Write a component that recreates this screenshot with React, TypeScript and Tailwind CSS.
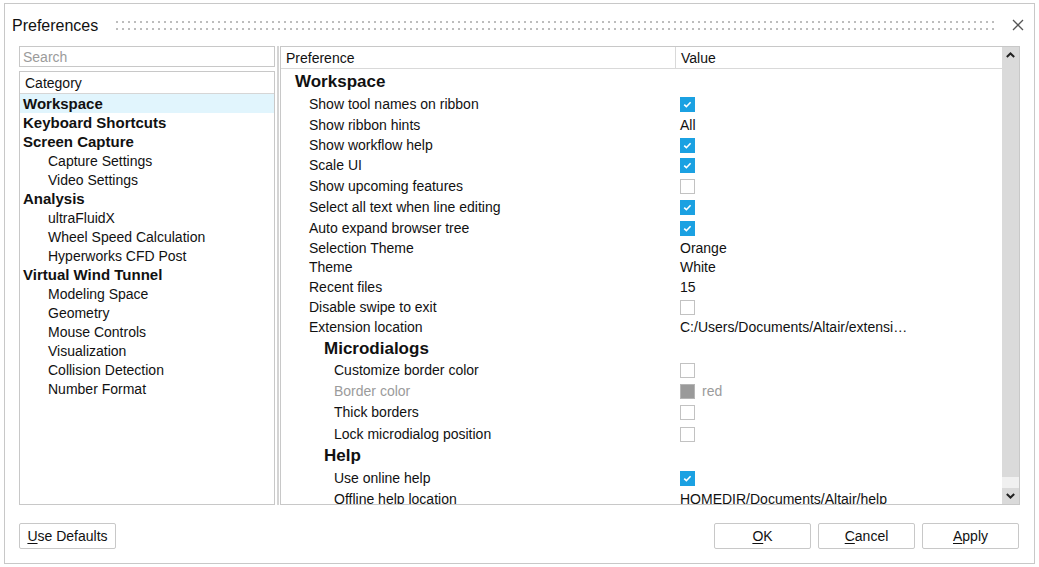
import React from 'react';

const categories: { label: string; bold?: boolean }[] = [
  { label: 'Workspace', bold: true },
  { label: 'Keyboard Shortcuts', bold: true },
  { label: 'Screen Capture', bold: true },
  { label: 'Capture Settings' },
  { label: 'Video Settings' },
  { label: 'Analysis', bold: true },
  { label: 'ultraFluidX' },
  { label: 'Wheel Speed Calculation' },
  { label: 'Hyperworks CFD Post' },
  { label: 'Virtual Wind Tunnel', bold: true },
  { label: 'Modeling Space' },
  { label: 'Geometry' },
  { label: 'Mouse Controls' },
  { label: 'Visualization' },
  { label: 'Collision Detection' },
  { label: 'Number Format' },
];

type Value = 'on' | 'off' | 'swatch' | string;

type Pref = {
  label: string;
  h: string;
  indent: string;
  heading?: boolean;
  value?: Value;
  disabled?: boolean;
};

const prefs: Pref[] = [
  { label: 'Workspace', h: 'h-[24px]', indent: 'pl-[14px]', heading: true },
  { label: 'Show tool names on ribbon', h: 'h-[21px]', indent: 'pl-[28px]', value: 'on' },
  { label: 'Show ribbon hints', h: 'h-[20px]', indent: 'pl-[28px]', value: 'All' },
  { label: 'Show workflow help', h: 'h-[20px]', indent: 'pl-[28px]', value: 'on' },
  { label: 'Scale UI', h: 'h-[21px]', indent: 'pl-[28px]', value: 'on' },
  { label: 'Show upcoming features', h: 'h-[21px]', indent: 'pl-[28px]', value: 'off' },
  { label: 'Select all text when line editing', h: 'h-[21px]', indent: 'pl-[28px]', value: 'on' },
  { label: 'Auto expand browser tree', h: 'h-[21px]', indent: 'pl-[28px]', value: 'on' },
  { label: 'Selection Theme', h: 'h-[19px]', indent: 'pl-[28px]', value: 'Orange' },
  { label: 'Theme', h: 'h-[19px]', indent: 'pl-[28px]', value: 'White' },
  { label: 'Recent files', h: 'h-[20px]', indent: 'pl-[28px]', value: '15' },
  { label: 'Disable swipe to exit', h: 'h-[20px]', indent: 'pl-[28px]', value: 'off' },
  { label: 'Extension location', h: 'h-[21px]', indent: 'pl-[28px]', value: 'C:/Users/Documents/Altair/extensi…' },
  { label: 'Microdialogs', h: 'h-[22px]', indent: 'pl-[43px]', heading: true },
  { label: 'Customize border color', h: 'h-[21px]', indent: 'pl-[53px]', value: 'off' },
  { label: 'Border color', h: 'h-[21px]', indent: 'pl-[53px]', value: 'swatch', disabled: true },
  { label: 'Thick borders', h: 'h-[21px]', indent: 'pl-[53px]', value: 'off' },
  { label: 'Lock microdialog position', h: 'h-[22px]', indent: 'pl-[53px]', value: 'off' },
  { label: 'Help', h: 'h-[22px]', indent: 'pl-[43px]', heading: true },
  { label: 'Use online help', h: 'h-[22px]', indent: 'pl-[53px]', value: 'on' },
  { label: 'Offline help location', h: 'h-[20px]', indent: 'pl-[53px]', value: 'HOMEDIR/Documents/Altair/help' },
];

function CheckBox({ checked }: { checked: boolean }) {
  if (checked) {
    return (
      <div className="w-[15px] h-[15px] bg-[#1ba1e2] flex items-center justify-center">
        <svg width="15" height="15" viewBox="0 0 15 15">
          <path d="M4.2 7.6 L6.4 9.7 L10.6 5.2" fill="none" stroke="white" strokeWidth="1.6" />
        </svg>
      </div>
    );
  }
  return <div className="w-[15px] h-[15px] bg-white border border-[#c2c2c2]" />;
}

function ValueCell({ value, disabled }: { value?: Value; disabled?: boolean }) {
  if (value === undefined) return null;
  if (value === 'on') return <CheckBox checked />;
  if (value === 'off') return <CheckBox checked={false} />;
  if (value === 'swatch')
    return (
      <div className="flex items-center gap-[7px]">
        <div className="w-[15px] h-[15px] bg-[#9a9a9a] border border-[#b5b5b5]" />
        <span className={disabled ? 'text-[#9b9b9b]' : ''}>red</span>
      </div>
    );
  return <span className="whitespace-nowrap">{value}</span>;
}

function Button({ first, rest }: { first: string; rest: string }) {
  return (
    <button className="w-[97px] h-[26px] bg-white border border-[#c8c8c8] rounded-[2px] text-[14px] text-[#111] flex items-center justify-center">
      <span className="underline underline-offset-2">{first}</span>
      {rest}
    </button>
  );
}

function Chevron({ up }: { up?: boolean }) {
  return (
    <svg width="9" height="6" viewBox="0 0 9 6" className={up ? '' : 'rotate-180'}>
      <path d="M0.8 5 L4.5 1.5 L8.2 5" fill="none" stroke="#222" strokeWidth="2" />
    </svg>
  );
}

export default function App() {
  return (
    <div className="w-[1039px] h-[567px] bg-white pt-[3px] pb-[3px] pl-[4px] pr-[4px] font-['Liberation_Sans',Arial,sans-serif] text-[#111]">
      <div className="h-full border border-[#c8c8c8] flex flex-col">
        {/* Title bar */}
        <div className="h-[42px] flex items-center shrink-0">
          <span className="pl-[7px] pt-[2px] text-[16px] leading-none w-[111px]">Preferences</span>
          <svg className="flex-1 h-[9px]" height="9">
            <defs>
              <pattern id="grip" width="6" height="7" patternUnits="userSpaceOnUse">
                <rect x="0" y="0" width="2" height="2" fill="#bdbdbd" />
              </pattern>
            </defs>
            <rect x="0" y="0" width="100%" height="9" fill="url(#grip)" />
          </svg>
          <div className="w-[37px] flex items-center justify-center">
            <svg width="12" height="12" viewBox="0 0 12 12" className="ml-[5px]">
              <path d="M1 1 L11 11 M11 1 L1 11" stroke="#555" strokeWidth="1.3" />
            </svg>
          </div>
        </div>

        {/* Body */}
        <div className="flex px-[14px] h-[459px] shrink-0">
          {/* Left column */}
          <div className="w-[256px] flex flex-col gap-[4px]">
            <div className="h-[21px] border border-[#c8c8c8] flex items-center pl-[3px] pt-[2px] text-[14px] text-[#9b9b9b]">Search</div>
            <div className="flex-1 border border-[#c8c8c8] flex flex-col">
              <div className="h-[22px] border-b border-[#d6d6d6] flex items-center pl-[5px] pt-[2px] text-[14px]">Category</div>
              {categories.map((c, i) => (
                <div
                  key={c.label}
                  className={`h-[19px] flex items-center pt-[1px] ${i === 0 ? 'bg-[#e1f5fd]' : ''} ${
                    c.bold ? 'pl-[3px] font-bold text-[15px]' : 'pl-[28px] text-[14px]'
                  }`}
                >
                  {c.label}
                </div>
              ))}
            </div>
          </div>

          {/* Splitter */}
          <div className="w-[5px] flex justify-center">
            <div className="w-[2px] h-full bg-[#d4d4d4]" />
          </div>

          {/* Right panel */}
          <div className="flex-1 border border-[#c8c8c8] flex overflow-hidden">
            <div className="flex-1 flex flex-col overflow-hidden">
              <div className="h-[22px] shrink-0 border-b border-[#d9d9d9] flex text-[14px]">
                <div className="w-[395px] border-r border-[#d9d9d9] flex items-center pl-[5px] pt-[2px]">Preference</div>
                <div className="flex-1 flex items-center pl-[5px] pt-[2px]">Value</div>
              </div>
              <div className="flex flex-col text-[14px]">
                {prefs.map((p) => (
                  <div key={p.label} className={`${p.h} flex items-center shrink-0 pt-[2px]`}>
                    <div
                      className={`w-[395px] ${p.indent} ${
                        p.heading ? 'font-bold text-[17px]' : ''
                      } ${p.disabled ? 'text-[#9b9b9b]' : ''}`}
                    >
                      {p.label}
                    </div>
                    <div className="flex-1 pl-[4px] flex items-center">
                      <ValueCell value={p.value} disabled={p.disabled} />
                    </div>
                  </div>
                ))}
              </div>
            </div>
            {/* Scrollbar */}
            <div className="w-[17px] flex flex-col bg-[#dadada]">
              <div className="h-[16px] flex items-center justify-center">
                <Chevron up />
              </div>
              <div className="flex-1" />
              <div className="h-[11px] bg-[#f0f0f0]" />
              <div className="h-[16px] flex items-center justify-center">
                <Chevron />
              </div>
            </div>
          </div>
        </div>

        {/* Footer */}
        <div className="flex items-start pl-[14px] pr-[15px] pt-[18px]">
          <Button first="U" rest="se Defaults" />
          <div className="flex-1" />
          <div className="flex gap-[7px]">
            <Button first="O" rest="K" />
            <Button first="C" rest="ancel" />
            <Button first="A" rest="pply" />
          </div>
        </div>
      </div>
    </div>
  );
}
